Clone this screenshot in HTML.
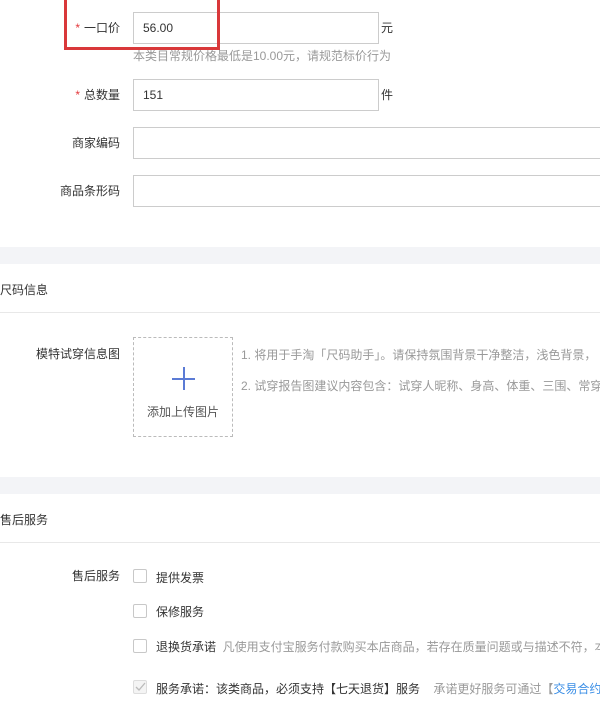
<!DOCTYPE html><html><head><meta charset="utf-8"><style>
body{margin:0;width:600px;height:708px;overflow:hidden;background:#fff;font-family:"Liberation Sans","Noto Sans CJK SC",sans-serif;font-size:12px;color:#333;position:relative}
.a{position:absolute;white-space:nowrap}
.lbl{position:absolute;right:480px;white-space:nowrap;line-height:16px}
.inp{position:absolute;border:1px solid #ccc;box-sizing:border-box;height:32px;left:133px;padding-left:9px;line-height:30px;color:#333}
.star{color:#e4393c;margin-right:4px}
.band{position:absolute;left:0;width:600px;height:17px;background:#f3f4f7}
.hr{position:absolute;left:0;width:600px;height:1px;background:#e8e8e8}
.cb{position:absolute;left:133px;width:14px;height:14px;border:1px solid #c8c8c8;border-radius:2px;box-sizing:border-box;background:#fff}
.g{color:#999}
</style></head><body>
<div class="lbl" style="top:20px"><span class="star">*</span>一口价</div>
<div class="inp" style="top:12px;width:246px">56.00</div>
<div class="a" style="left:381px;top:19px">元</div>
<div class="a g" style="left:133px;top:47px">本类目常规价格最低是10.00元，请规范标价行为</div>
<div style="position:absolute;left:64px;top:-3px;width:150px;height:47px;border:3px solid #d9383a"></div>
<div class="lbl" style="top:87px"><span class="star">*</span>总数量</div>
<div class="inp" style="top:79px;width:246px">151</div>
<div class="a" style="left:381px;top:86px">件</div>
<div class="lbl" style="top:135px">商家编码</div>
<div class="inp" style="top:127px;width:480px"></div>
<div class="lbl" style="top:183px">商品条形码</div>
<div class="inp" style="top:175px;width:480px"></div>
<div class="band" style="top:247px"></div>
<div class="a" style="left:0;top:281px">尺码信息</div>
<div class="hr" style="top:312px"></div>
<div class="lbl" style="top:346px">模特试穿信息图</div>
<div style="position:absolute;left:133px;top:337px;width:100px;height:100px;border:1px dashed #bbb;box-sizing:border-box"></div>
<div style="position:absolute;left:172px;top:378px;width:23px;height:1.5px;background:#5b7bd5"></div>
<div style="position:absolute;left:183px;top:367px;width:1.5px;height:23px;background:#5b7bd5"></div>
<div class="a" style="left:147px;top:403px;color:#555">添加上传图片</div>
<div class="a g" style="left:241px;top:346px">1. 将用于手淘「尺码助手」。请保持氛围背景干净整洁，浅色背景，</div>
<div class="a g" style="left:241px;top:377px">2. 试穿报告图建议内容包含：试穿人昵称、身高、体重、三围、常穿</div>
<div class="band" style="top:477px"></div>
<div class="a" style="left:0;top:511px">售后服务</div>
<div class="hr" style="top:542px"></div>
<div class="lbl" style="top:568px">售后服务</div>
<div class="cb" style="top:569px"></div><div class="a" style="left:156px;top:569px">提供发票</div>
<div class="cb" style="top:604px"></div><div class="a" style="left:156px;top:603px">保修服务</div>
<div class="cb" style="top:639px"></div><div class="a" style="left:156px;top:638px">退换货承诺 <span class="g">&nbsp;凡使用支付宝服务付款购买本店商品，若存在质量问题或与描述不符，本</span></div>
<div class="cb" style="top:680px;background:#f4f4f4;border-color:#ddd"><svg width="12" height="12" style="position:absolute;left:0;top:0"><path d="M2 6l3 3 6-7" stroke="#bbb" stroke-width="1.3" fill="none"/></svg></div>
<div class="a" style="left:156px;top:680px">服务承诺：该类商品，必须支持【七天退货】服务 <span class="g">&nbsp;&nbsp;&nbsp;承诺更好服务可通过【</span><span style="color:#3a8ee6">交易合约</span></div>
</body></html>
